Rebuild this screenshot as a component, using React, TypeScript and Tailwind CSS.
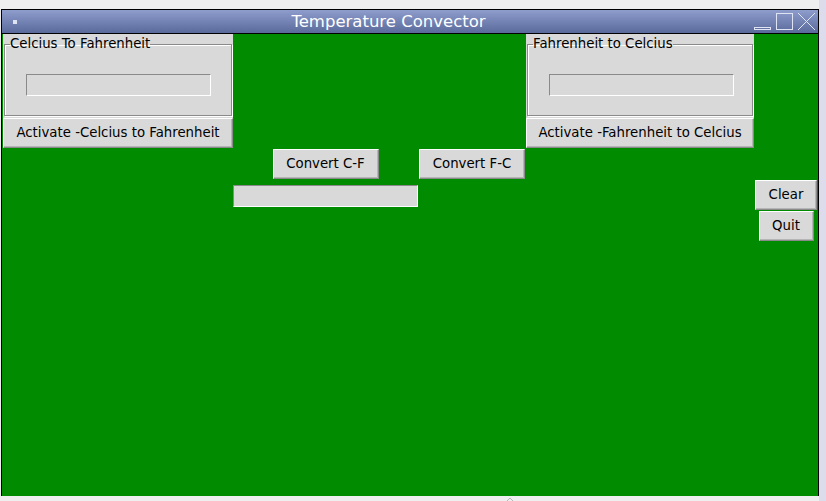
const raised =
  "bg-[#d9d9d9] border border-t-white border-l-white border-r-[#8a8a8a] border-b-[#8a8a8a] shadow-[inset_-1px_-1px_0_#b5b5b5]";
const sunken =
  "bg-[#d9d9d9] border border-t-[#8a8a8a] border-l-[#8a8a8a] border-r-white border-b-white";

function TkButton({ label, className }: { label: string; className: string }) {
  return (
    <button
      type="button"
      className={`${raised} flex h-[30px] items-center justify-center text-[13.3px] text-black ${className}`}
    >
      {label}
    </button>
  );
}

function ConvFrame({ title, action }: { title: string; action: string }) {
  return (
    <>
      <div className="h-[84px] bg-[#d9d9d9] px-[1px] pt-[3px] pb-[2px]">
        <fieldset className="h-full border border-[#8a8a8a] px-0 shadow-[inset_1px_1px_0_white,1px_1px_0_white]">
          <legend className="ml-[5px] px-0 text-[13.3px] leading-[14px] text-black">{title}</legend>
          <div className="ml-[21px] mt-[23px] flex">
            <input readOnly className={`${sunken} h-[22px] w-[185px] outline-none`} />
          </div>
        </fieldset>
      </div>
      <TkButton label={action} className="w-full" />
    </>
  );
}

function WindowButtons() {
  return (
    <svg width="66" height="23" viewBox="0 0 66 23" className="shrink-0">
      <rect x="2.5" y="17.5" width="16" height="2" fill="none" stroke="#dfe3f3" />
      <rect x="24.5" y="3.5" width="16" height="16" fill="none" stroke="#dfe3f3" />
      <path d="M46 3 L63 20 M63 3 L46 20" stroke="#dfe3f3" strokeWidth="1" />
    </svg>
  );
}

export default function App() {
  return (
    <div className="flex h-[501px] w-[826px] overflow-hidden bg-[#efefef] font-['DejaVu_Sans',sans-serif]">
      <div className="flex w-[819px] flex-col">
        <div className="h-[9px] shrink-0" />

        <div className="ml-[1px] flex h-[488px] w-[818px] flex-col border border-b-0 border-black">
          <div className="flex h-[23px] shrink-0 items-center bg-gradient-to-b from-[#8e9dcc] to-[#5a6a9b]">
            <div className="ml-[11px] h-[4px] w-[4px] bg-[#dfe3f3]" />
            <div className="flex-1 pl-[8px] text-center text-[16.5px] leading-[23px] text-white">
              Temperature Convector
            </div>
            <WindowButtons />
          </div>
          <div className="h-[1px] shrink-0 bg-black" />

          <div className="flex-1 bg-[#008b00] pl-[1px]">
            <div className="grid grid-cols-[230px_185px_108px_228px_64px] grid-rows-[84px_31px_31px_31px_31px] items-start">
              <div className="col-start-1 row-span-2 row-start-1">
                <ConvFrame title="Celcius To Fahrenheit" action="Activate -Celcius to Fahrenheit" />
              </div>
              <div className="col-start-4 row-span-2 row-start-1">
                <ConvFrame title="Fahrenheit to Celcius" action="Activate -Fahrenheit to Celcius" />
              </div>

              <div className="col-start-2 row-start-3 flex justify-center">
                <TkButton label="Convert C-F" className="w-[106px]" />
              </div>
              <div className="col-start-3 row-start-3 flex justify-center">
                <TkButton label="Convert F-C" className="w-[106px]" />
              </div>

              <div className="col-start-2 row-start-4 flex h-[31px] items-center">
                <input readOnly className={`${sunken} h-[22px] w-[185px] outline-none`} />
              </div>
              <div className="col-start-5 row-start-4 flex justify-center">
                <TkButton label="Clear" className="w-[62px]" />
              </div>
              <div className="col-start-5 row-start-5 flex justify-center">
                <TkButton label="Quit" className="w-[55px]" />
              </div>
            </div>
          </div>
        </div>

        <div className="flex flex-1 justify-center pl-[200px] pt-[1px]">
          <svg width="8" height="4" viewBox="0 0 8 4">
            <path d="M1 4 L4 1 L7 4" fill="none" stroke="#b8b8b8" />
          </svg>
        </div>
      </div>
      <div className="w-[7px] bg-[#dcdcec]" />
    </div>
  );
}
